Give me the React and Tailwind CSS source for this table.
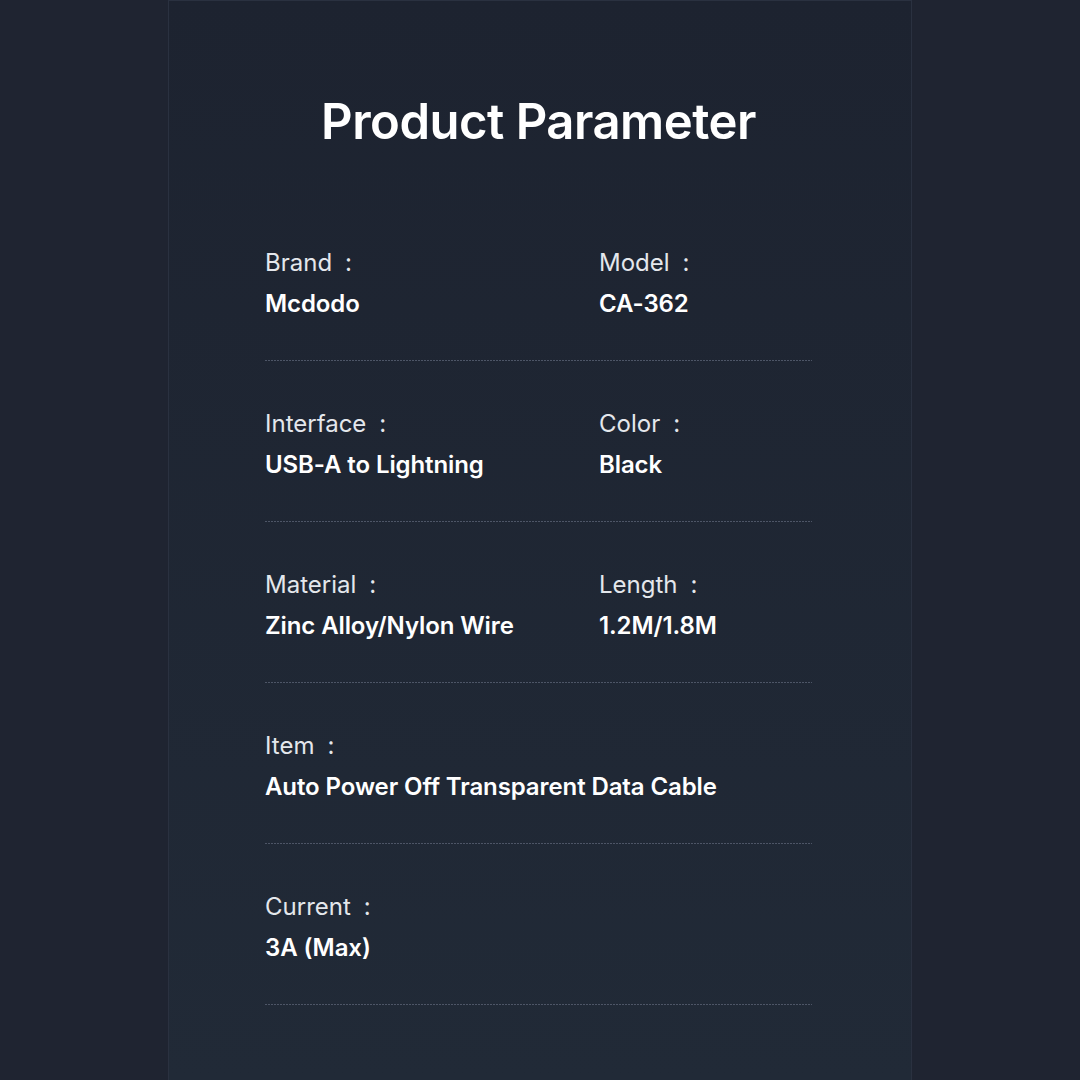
const params = [
  [
    { label: "Brand", value: "Mcdodo" },
    { label: "Model", value: "CA-362" },
  ],
  [
    { label: "Interface", value: "USB-A to Lightning" },
    { label: "Color", value: "Black" },
  ],
  [
    { label: "Material", value: "Zinc Alloy/Nylon Wire" },
    { label: "Length", value: "1.2M/1.8M" },
  ],
  [{ label: "Item", value: "Auto Power Off Transparent Data Cable" }],
  [{ label: "Current", value: "3A (Max)" }],
];

const Field = ({ label, value }) => (
  <div className="flex flex-col">
    <p className="text-[24px] leading-[30px] text-[#e4e7ec]">
      {label}
      <span className="ml-[13px]">:</span>
    </p>
    <p className="mt-[11px] whitespace-nowrap text-[24px] font-semibold leading-[30px] tracking-[-0.1px] text-white">
      {value}
    </p>
  </div>
);

const App = () => {
  return (
    <div
      className="flex h-[1080px] w-[1080px] justify-center bg-[#1f2431]"
      style={{ fontFamily: "Inter, 'Noto Sans', sans-serif" }}
    >
      <div className="flex w-[744px] flex-col border-x border-t border-[#2a3140] bg-gradient-to-b from-[#1d2330] to-[#212a37] pl-[96px] pr-[99px]">
        <h1 className="mt-[91px] text-center text-[49px] font-semibold leading-[60px] tracking-[-0.5px] text-white">
          Product Parameter
        </h1>
        <div className="mt-[96px] flex flex-col">
          {params.map((row, i) => (
            <div key={i} className="flex flex-col">
              <div className="grid grid-cols-[334px_1fr]">
                {row.map((f) => (
                  <Field key={f.label} {...f} />
                ))}
              </div>
              <div className="mt-[41px] mb-[48px] h-px bg-[repeating-linear-gradient(90deg,#4d5566_0_2px,transparent_2px_3px)]" />
            </div>
          ))}
        </div>
      </div>
    </div>
  );
};

export default App;
